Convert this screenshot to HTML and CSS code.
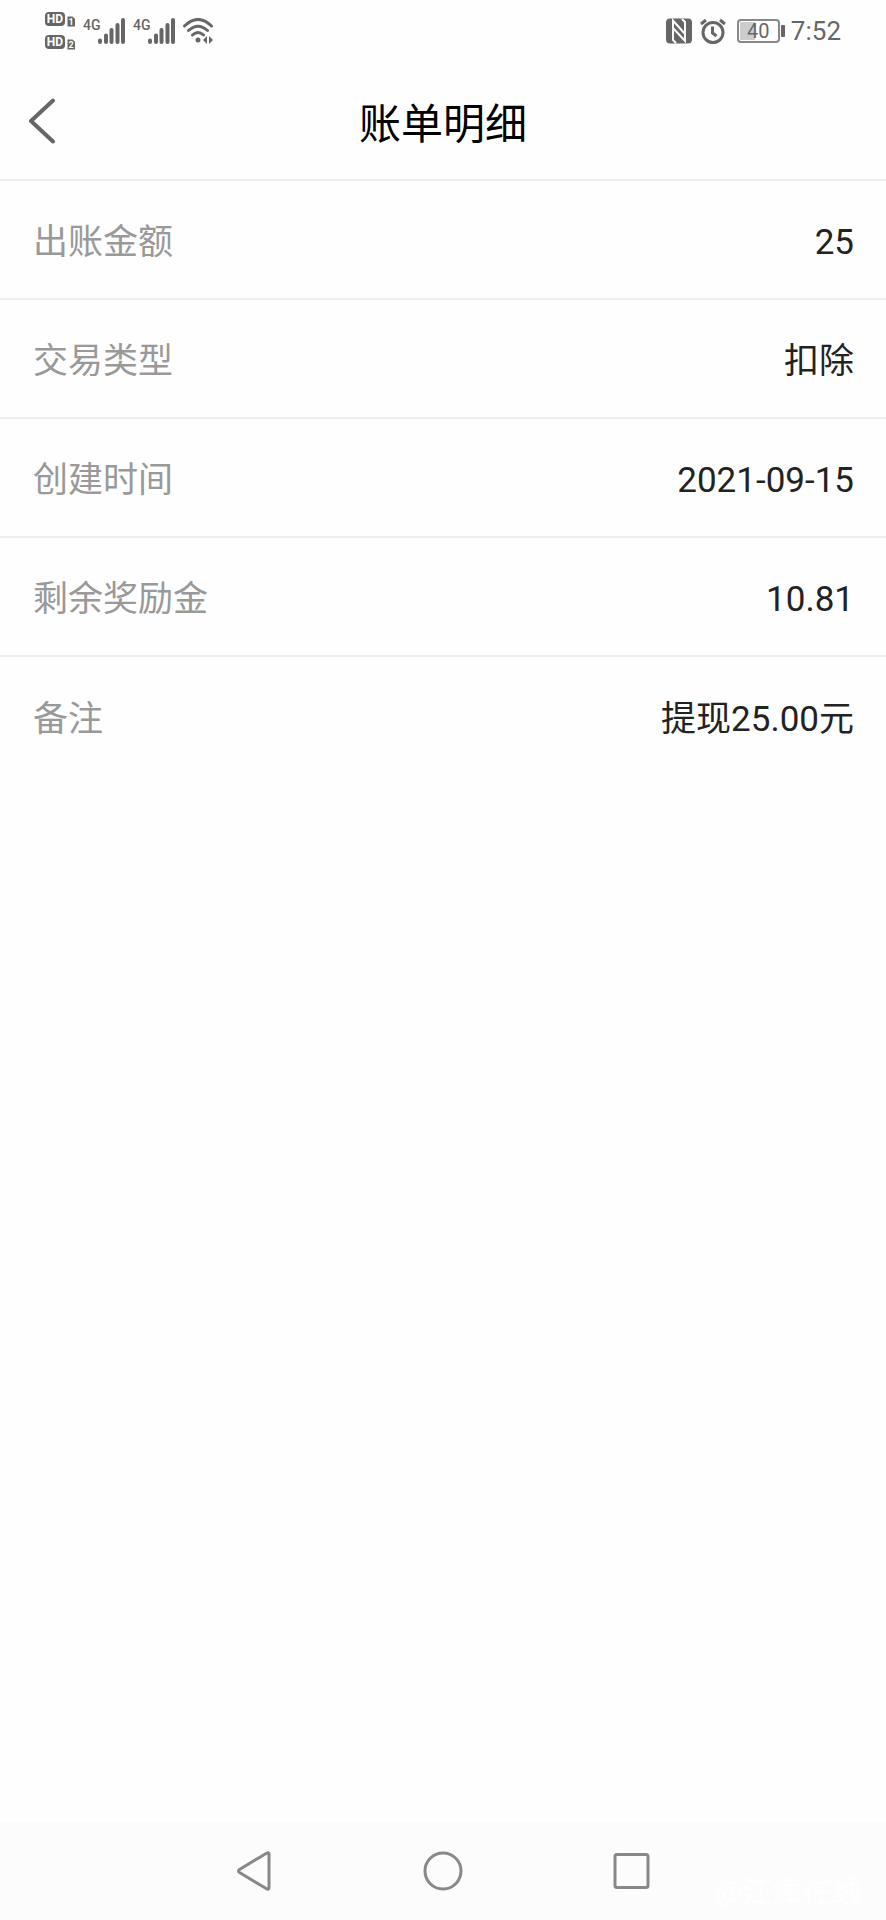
FILE: index.html
```html
<!DOCTYPE html>
<html lang="zh-CN">

<head>
  <meta charset="UTF-8" />
  <meta name="viewport" content="width=device-width, initial-scale=1.0" />
  <title>账单明细</title>
  <link rel="stylesheet" href="styles.css">
</head>

<body>
  <div class="status-bar">
    <div class="status-left">
      <svg class="hd" width="30" height="38" viewBox="0 0 30 38" aria-hidden="true">
        <rect x="0" y="0" width="20" height="14" rx="4" />
        <text class="hd-text" x="10" y="11" text-anchor="middle">HD</text>
        <path d="M22.500 4.500h5l2.500 2.500v7.500h-7.500z" />
        <text class="sim-text" x="26" y="13" text-anchor="middle">1</text>
        <rect x="0" y="23" width="20" height="14" rx="4" />
        <text class="hd-text" x="10" y="34" text-anchor="middle">HD</text>
        <path d="M22.500 27.500h5l2.500 2.500v7.500h-7.500z" />
        <text class="sim-text" x="26" y="36" text-anchor="middle">2</text>
      </svg>
      <div class="signal">
        <span>4G</span>
        <svg width="27" height="26" viewBox="0 0 27 26" aria-hidden="true">
          <path d="M2 22.500v1.500M8 17.500v6.500M13.500 12v12M19.500 7v17M25 2v22" />
        </svg>
      </div>
      <div class="signal">
        <span>4G</span>
        <svg width="27" height="26" viewBox="0 0 27 26" aria-hidden="true">
          <path d="M2 22.500v1.500M8 17.500v6.500M13.500 12v12M19.500 7v17M25 2v22" />
        </svg>
      </div>
      <svg class="wifi" width="31" height="26" viewBox="0 0 31 26" aria-hidden="true">
        <path class="arc" d="M1.500 8Q15 -5 28.500 8M5.500 12.500Q15 4 24.500 12.500M9.500 17Q15 12 20.500 17" />
        <circle cx="15" cy="22" r="2.500" />
        <path d="M24 18v8l-4-4zM26 18v8l4-4z" />
      </svg>
    </div>
    <div class="status-right">
      <svg class="nfc" width="26" height="26" viewBox="0 0 26 26" aria-hidden="true">
        <rect x="0" y="0.500" width="26" height="25" rx="4" />
        <path class="cut" d="M10 25L7 22V2.500L19 16M16 1l3 3v19L7 10" />
      </svg>
      <svg class="alarm" width="26" height="26" viewBox="0 0 26 26" aria-hidden="true">
        <circle cx="13" cy="14.500" r="10" />
        <path d="M12.500 8.500v6.500l4 3M1 6l5-4M25 6l-5-4" />
      </svg>
      <div class="battery"><span>40</span></div>
      <span class="time">7:52</span>
    </div>
  </div>

  <header class="header">
    <button type="button" class="back" aria-label="返回">
      <svg width="26" height="46" viewBox="0 0 26 46" aria-hidden="true">
        <path d="M24 2.500L2 23l22 20.500" />
      </svg>
    </button>
    <h1>账单明细</h1>
  </header>

  <main>
    <dl class="detail-list">
      <div class="row">
        <dt>出账金额</dt>
        <dd>25</dd>
      </div>
      <div class="row">
        <dt>交易类型</dt>
        <dd>扣除</dd>
      </div>
      <div class="row">
        <dt>创建时间</dt>
        <dd>2021-09-15</dd>
      </div>
      <div class="row">
        <dt>剩余奖励金</dt>
        <dd>10.81</dd>
      </div>
      <div class="row">
        <dt>备注</dt>
        <dd>提现25.00元</dd>
      </div>
    </dl>
  </main>

  <nav class="nav-bar">
    <button type="button" aria-label="后退">
      <svg width="40" height="40" viewBox="0 0 40 40" aria-hidden="true">
        <path d="M35 3.500v33q0 2.500-2.500 1.200L5.500 21.500q-2-1.500 0-3L32.500 2.300q2.500-1.300 2.500 1.200z" />
      </svg>
    </button>
    <button type="button" aria-label="主页">
      <svg width="40" height="40" viewBox="0 0 40 40" aria-hidden="true">
        <circle cx="20" cy="20" r="18" />
      </svg>
    </button>
    <button type="button" aria-label="最近任务">
      <svg width="40" height="40" viewBox="0 0 40 40" aria-hidden="true">
        <rect x="3" y="3.500" width="33" height="33" rx="2" />
      </svg>
    </button>
    <span class="watermark">@江津在线</span>
  </nav>
</body>

</html>
```
FILE: styles.css
```css
:root {
  --page-bg: #fefefe;
  --line-color: #eeeeee;
  --label-color: #999999;
  --text-color: #222222;
  --icon-color: #666666;
}

* {
  margin: 0;
  padding: 0;
  box-sizing: border-box;
}

body {
  display: flex;
  flex-direction: column;
  min-height: 100vh;
  font-family: Roboto, "Noto Sans CJK SC", sans-serif;
  background-color: var(--page-bg);
  color: var(--text-color);
}

button {
  border: none;
  background: none;
  cursor: pointer;
}

svg {
  display: block;
}

/* status bar */
.status-bar {
  display: flex;
  justify-content: space-between;
  align-items: center;
  height: 62px;
  padding: 0 45px;
  color: var(--icon-color);
}

.status-left,
.status-right {
  display: flex;
  align-items: center;
  gap: 8px;
}

.hd {
  fill: var(--icon-color);
}

.hd-text,
.sim-text {
  fill: var(--page-bg);
  font-weight: bold;
}

.hd-text {
  font-size: 12px;
}

.sim-text {
  font-size: 9px;
}

.signal {
  display: flex;
  align-items: flex-start;
}

.signal span {
  width: 15px;
  font-size: 14px;
  line-height: 14px;
  font-weight: 500;
}

.signal path {
  stroke: var(--icon-color);
  stroke-width: 4;
  stroke-linecap: round;
}

.wifi {
  fill: var(--icon-color);
}

.wifi .arc {
  fill: none;
  stroke: var(--icon-color);
  stroke-width: 3;
  stroke-linecap: round;
}

.nfc {
  fill: var(--icon-color);
}

.nfc .cut {
  fill: none;
  stroke: var(--page-bg);
  stroke-width: 2;
}

.alarm {
  fill: none;
  stroke: var(--icon-color);
  stroke-width: 3;
}

.battery {
  position: relative;
  width: 43px;
  height: 24px;
  margin: 0 3px;
  border: 2px solid #888888;
  border-radius: 4px;
  background: linear-gradient(to right, #cccccc 40%, transparent 40%) content-box;
  padding: 1px;
  font-size: 20px;
  line-height: 18px;
  text-align: center;
}

.battery::after {
  content: "";
  position: absolute;
  top: 4px;
  right: -7px;
  width: 4px;
  height: 12px;
  border-radius: 1px;
  background-color: var(--icon-color);
}

.time {
  font-size: 26px;
}

/* title */
.header {
  display: grid;
  grid-template-columns: 1fr auto 1fr;
  align-items: center;
  height: 119px;
  padding: 0 29px;
  border-bottom: 2px solid var(--line-color);
}

.back {
  justify-self: start;
}

.back path {
  fill: none;
  stroke: var(--icon-color);
  stroke-width: 4;
  stroke-linecap: round;
  stroke-linejoin: round;
}

.header h1 {
  font-size: 42px;
  font-weight: 400;
  color: #000000;
}

/* bill details */
main {
  flex: 1;
}

.row {
  display: flex;
  justify-content: space-between;
  align-items: center;
  height: 119px;
  padding: 6px 32px 0 33px;
  border-bottom: 2px solid var(--line-color);
  font-size: 35px;
  line-height: 48px;
}

.row:last-child {
  border-bottom: none;
}

.row dt {
  color: var(--label-color);
}

/* system navigation */
.nav-bar {
  position: relative;
  display: flex;
  justify-content: center;
  align-items: center;
  gap: 149px;
  height: 98px;
  background-color: #fcfcfc;
}

.nav-bar svg {
  fill: none;
  stroke: #888888;
  stroke-width: 3;
}

.watermark {
  position: absolute;
  right: 24px;
  bottom: 10px;
  font-size: 30px;
  line-height: 36px;
  font-weight: bold;
  color: #fefefe;
}
```
